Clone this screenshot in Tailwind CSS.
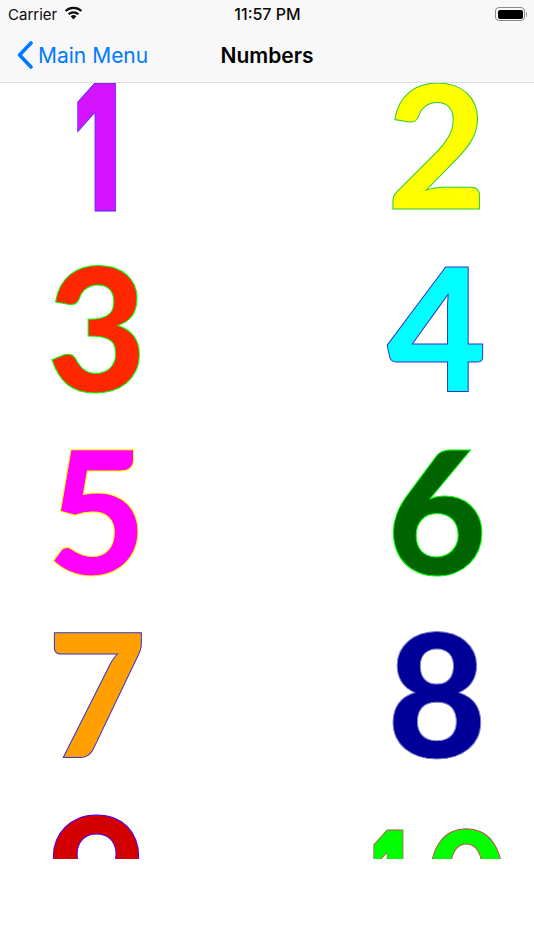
<!DOCTYPE html>
<html lang="en">
<head>
  <meta charset="UTF-8" />
  <title>Numbers</title>
  <script src="https://cdn.jsdelivr.net/npm/@tailwindcss/browser@4"></script>
</head>
<body class="bg-white font-['Inter',sans-serif] w-[534px] h-[950px] overflow-hidden">

  <!-- Status bar -->
  <div class="relative h-[28px] bg-[#f8f8f8] grid grid-cols-[1fr_auto_1fr] items-center pl-[8px] pr-[7px] text-[#0a0a0a]">
    <div class="flex items-center gap-[7px]">
      <span class="text-[15px] leading-none">Carrier</span>
      <svg width="19" height="14" viewBox="0 0 19 14" class="-mt-[2px]">
        <path d="M9.5 13.5 L6.6 10.3 A4.2 4.2 0 0 1 12.4 10.3 Z" fill="#0a0a0a"/>
        <path d="M4.6 8.2 A7.2 7.2 0 0 1 14.4 8.2" fill="none" stroke="#0a0a0a" stroke-width="2.2"/>
        <path d="M1.6 5 A11.4 11.4 0 0 1 17.4 5" fill="none" stroke="#0a0a0a" stroke-width="2.2"/>
      </svg>
    </div>
    <span class="text-[16px] leading-none font-medium">11:57 PM</span>
    <div class="flex items-center justify-end">
      <div class="w-[30px] h-[14px] rounded-[4px] border border-[#8a8a8a] p-[1.5px]">
        <div class="w-full h-full rounded-[2px] bg-black"></div>
      </div>
      <div class="w-[1.5px] h-[5px] bg-[#9a9a9a] rounded-r-sm ml-[0.5px]"></div>
    </div>
  </div>

  <!-- Nav bar -->
  <div class="relative h-[55px] bg-[#f8f8f8] border-b border-[#dedede] flex items-center justify-center">
    <div class="absolute left-[17px] top-[13px] flex items-center gap-[5px] text-[#007aff]">
      <svg width="16" height="28" viewBox="0 0 16 28">
        <path d="M14 2 L2.6 14 L14 26" fill="none" stroke="#007aff" stroke-width="3.6" stroke-linecap="round" stroke-linejoin="round"/>
      </svg>
      <span class="text-[21px] leading-none">Main Menu</span>
    </div>
    <h1 class="text-[21px] font-semibold text-black leading-none">Numbers</h1>
  </div>

  <!-- Digits -->
  <div class="h-[776px] overflow-hidden grid grid-cols-[194px_194px] justify-between auto-rows-[183px] font-['Lato',sans-serif] font-black text-[172px] leading-[120px] text-center">
    <div class="scale-x-[.6] font-['Inter'] font-black text-[176px] leading-[128px] text-[#d414ff] [-webkit-text-stroke:1px_#3b2bff]">1</div>
    <div class="text-[#ffff00] [-webkit-text-stroke:1px_#33cc33]">2</div>
    <div class="text-[#ff2600] [-webkit-text-stroke:1px_#00ff00]">3</div>
    <div class="text-[#00ffff] [-webkit-text-stroke:1px_#3333cc]">4</div>
    <div class="text-[#ff00ff] [-webkit-text-stroke:1px_#ffff00]">5</div>
    <div class="text-[#006400] [-webkit-text-stroke:1px_#00ff00]">6</div>
    <div class="text-[#ffa000] [-webkit-text-stroke:1px_#3333cc]">7</div>
    <div class="text-[#000099] [-webkit-text-stroke:1px_#8080cc]">8</div>
    <div class="text-[#d40000] [-webkit-text-stroke:1px_#4400ff]">9</div>
    <div class="pr-[4px] text-[135px] text-[#00ff00] [-webkit-text-stroke:1px_#c05050]"><span class="inline-block scale-x-[.6] -ml-[6px] mr-[8px] font-['Inter'] font-black leading-[128px]">1</span>0</div>
  </div>

</body>
</html>
